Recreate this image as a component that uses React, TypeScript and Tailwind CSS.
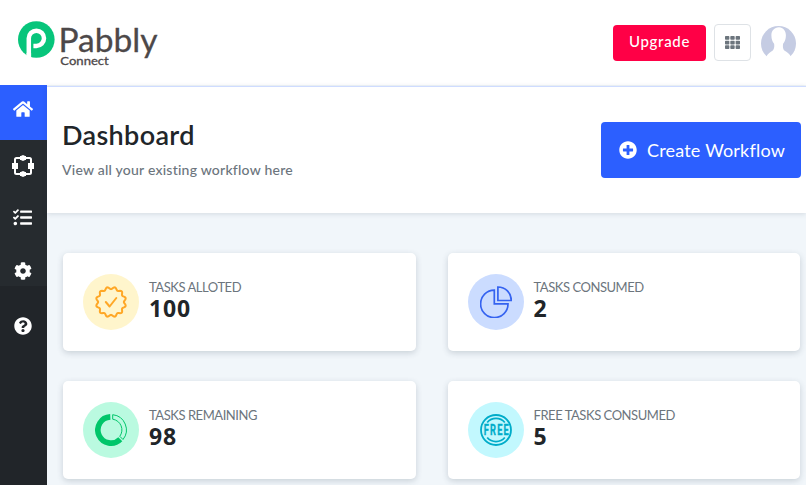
import type { ReactNode } from "react";
import { FaHome, FaTasks, FaCog, FaQuestionCircle, FaPlusCircle, FaTh } from "react-icons/fa";

function Logo() {
  return (
    <svg className="block h-[60px] w-[150px]" viewBox="0 0 150 60">
      <circle cx="18.3" cy="21.500" r="18.3" fill="#07c57b" />
      <path d="M10.800 41V20.300a7.600 7.600 0 1 1 7.600 7.600h-3" fill="none" stroke="#fff" strokeWidth="4.500" />
      <path d="M8.600 35h4.500v10h-4.500z" fill="#fff" />
      <text x="40.500" y="33.500" textLength="99" lengthAdjust="spacingAndGlyphs" fontFamily="Lato, sans-serif" fontSize="33" fill="#4d4849" stroke="#4d4849" strokeWidth=".3" strokeLinejoin="round">Pabbly</text>
      <text x="42.300" y="46.500" textLength="48.5" lengthAdjust="spacingAndGlyphs" fontFamily="Lato, sans-serif" fontSize="12" fill="#4d4849" stroke="#4d4849" strokeWidth=".3">Connect</text>
    </svg>
  );
}

function Avatar() {
  return (
    <svg className="block h-[36px] w-[36px]" viewBox="0 0 36 36">
      <circle cx="17.500" cy="18.500" r="17.5" fill="#c5cce3" />
      <path d="M18 2.200c-5 .4-7.800 3.600-7.600 8.300.1 3.400.8 6 2.700 8.300.4 2.800.2 5.200-1.600 7C9.500 27.300 7 28.300 5.300 31.500V37h24.600v-5.500c-1.700-3.200-4-4.200-6.200-5.700-1.900-1.800-2-4.200-1.600-7 1.900-2.300 2.700-4.900 2.800-8.300.1-4.300-2.500-8-6.900-8.300Z" fill="#fff" />
    </svg>
  );
}

function WorkflowIcon() {
  return (
    <svg className="block h-[22px] w-[22px]" viewBox="0 0 22 22">
      <rect x="3" y="3" width="16" height="16" rx="1.5" fill="none" stroke="#fff" strokeWidth="2" />
      <path d="M0 8h6v6H0zM16 8h6v6h-6z" fill="#fff" />
      <path d="M11 0l2.200 1H14v4h-.8L11 6 8.800 5H8V1h.8ZM11 16l2.200 1H14v4h-.8L11 22l-2.200-1H8v-4h.8Z" fill="#fff" />
    </svg>
  );
}

function badgePath() {
  let d = "";
  for (let i = 0; i <= 120; i++) {
    const a = (i / 120) * Math.PI * 2;
    const r = 14 + 1.15 * Math.cos(a * 12 + Math.PI);
    d += `${i ? "L" : "M"}${(16 + r * Math.sin(a)).toFixed(2)} ${(16 - r * Math.cos(a)).toFixed(2)}`;
  }
  return d + "Z";
}

const badge = (
  <svg className="h-8 w-8" viewBox="0 0 32 32" fill="none" stroke="#ffa726" strokeWidth="2" strokeLinecap="round" strokeLinejoin="round">
    <path d={badgePath()} />
    <path d="m10.800 16 3.800 4.500 6.700-8.500" strokeWidth="2" />
  </svg>
);

const pie = (
  <svg className="h-8 w-8" viewBox="0 0 32 32" fill="none" stroke="#3563f0" strokeWidth="1.700">
    <path d="M14.300 4.200V17.800H28A13.700 13.700 0 1 1 14.300 4.200Z" />
    <path d="M17.900 1V14.500H31.300A13.400 13.400 0 0 0 17.900 1Z" />
  </svg>
);

const ring = (
  <svg className="h-8 w-8" viewBox="0 0 32 32" fill="none" stroke="#00c66a">
    <path d="M15.300 2.900A13.100 13.100 0 1 0 25.300 25.200" strokeWidth="5.600" />
    <path d="M17.700.7A15.300 15.300 0 0 1 28 25.500L24.800 22.300A10.800 10.800 0 0 0 17.700 5.200Z" strokeWidth="1" />
  </svg>
);

const free = (
  <svg className="h-8 w-8" viewBox="0 0 32 32" fill="none" stroke="#00acc9" strokeWidth="1.800">
    <circle cx="16" cy="16" r="15" />
    <path d="M7.200 8.500a11.600 11.600 0 0 1 17.600 0M7.200 23.500a11.600 11.600 0 0 0 17.600 0" />
    <g transform="translate(3.700 21) scale(.66 1)">
      <text x="0" y="0" textLength="38" lengthAdjust="spacing" fontFamily="Roboto, sans-serif" fontWeight="700" fontSize="14" fill="#00acc9" stroke="#00acc9" strokeWidth=".3">FREE</text>
    </g>
  </svg>
);

function Card({ label, value, tint, icon }: { label: string; value: string; tint: string; icon: ReactNode }) {
  return (
    <article className="flex h-[98px] items-center rounded-[5px] bg-white pl-5 shadow-[0_2px_6px_rgba(40,60,80,0.2)]">
      <div className={`flex size-14 shrink-0 items-center justify-center rounded-full ${tint}`}>{icon}</div>
      <div className="ml-[10px] flex flex-col pb-[5px]">
        <span className="text-[13px] leading-[18px] tracking-[-0.45px] text-[#6c757d]">{label}</span>
        <strong className="-mt-px font-['Open_Sans',sans-serif] text-[23px] leading-[26px] font-bold tracking-[0.9px] text-[#212529]">{value}</strong>
      </div>
    </article>
  );
}

export default function App() {
  return (
    <div className="flex h-[485px] w-[806px] flex-col overflow-hidden bg-white font-['Lato',sans-serif]">
      <header className="flex h-[85px] shrink-0 items-center justify-between pr-[9px] pl-[18px]">
        <div className="mt-[10px]"><Logo /></div>
        <div className="flex items-center">
          <button className="h-9 w-[93px] rounded-[4px] bg-[#ff0046] pb-[3px] text-[15px] font-medium tracking-[0.7px] text-white">Upgrade</button>
          <button className="ml-2 flex h-[37px] w-[37px] items-center justify-center rounded-[4px] border border-[#dee2e6] text-[15px] text-[#6c757d]"><FaTh /></button>
          <div className="ml-[10px]"><Avatar /></div>
        </div>
      </header>
      <div className="flex min-h-0 flex-1">
        <nav className="flex w-[47px] shrink-0 flex-col items-center bg-[linear-gradient(#262b2f_201px,#212529_201px)] pr-[2px] text-white">
          <a className="-mr-[2px] flex h-[55px] w-[47px] shrink-0 items-center justify-center bg-[#2c5fff] pr-[2px] pb-[8px] text-[20px]"><FaHome /></a>
          <a className="flex h-[51px] items-center"><WorkflowIcon /></a>
          <a className="flex h-[52px] items-center text-[19px]"><FaTasks /></a>
          <a className="flex h-[56px] items-center text-[18px]"><FaCog /></a>
          <a className="flex h-[54px] items-center text-[18px]"><FaQuestionCircle /></a>
        </nav>
        <main className="min-w-0 flex-1 bg-[#f1f6fa] pt-px">
          <section className="flex h-[127px] justify-between border-t border-[#cfdcff] bg-white pr-[5px] pl-[15px] shadow-[0_1px_5px_rgba(40,60,80,0.15)]">
            <div>
              <h1 className="mt-[30px] text-[27px] leading-9 font-semibold tracking-[0.35px] text-[#212529]">Dashboard</h1>
              <p className="mt-[7px] text-[14px] leading-5 font-medium tracking-[0.23px] text-[#6c757d]">View all your existing workflow here</p>
            </div>
            <button className="mt-[35px] flex h-14 w-[200px] items-center justify-center gap-[10px] rounded-[4px] bg-[#2c5fff] pl-[2px] text-[18px] text-white">
              <FaPlusCircle /><span className="text-[18px] tracking-[0.2px]">Create Workflow</span>
            </button>
          </section>
          <section className="mt-10 grid grid-cols-2 gap-x-8 gap-y-[30px] pr-[6px] pl-4">
            <Card label="TASKS ALLOTED" value="100" tint="bg-[#fff5cc]" icon={badge} />
            <Card label="TASKS CONSUMED" value="2" tint="bg-[#cbdcff]" icon={pie} />
            <Card label="TASKS REMAINING" value="98" tint="bg-[#bafae0]" icon={ring} />
            <Card label="FREE TASKS CONSUMED" value="5" tint="bg-[#c2f8fe]" icon={free} />
          </section>
        </main>
      </div>
    </div>
  );
}
